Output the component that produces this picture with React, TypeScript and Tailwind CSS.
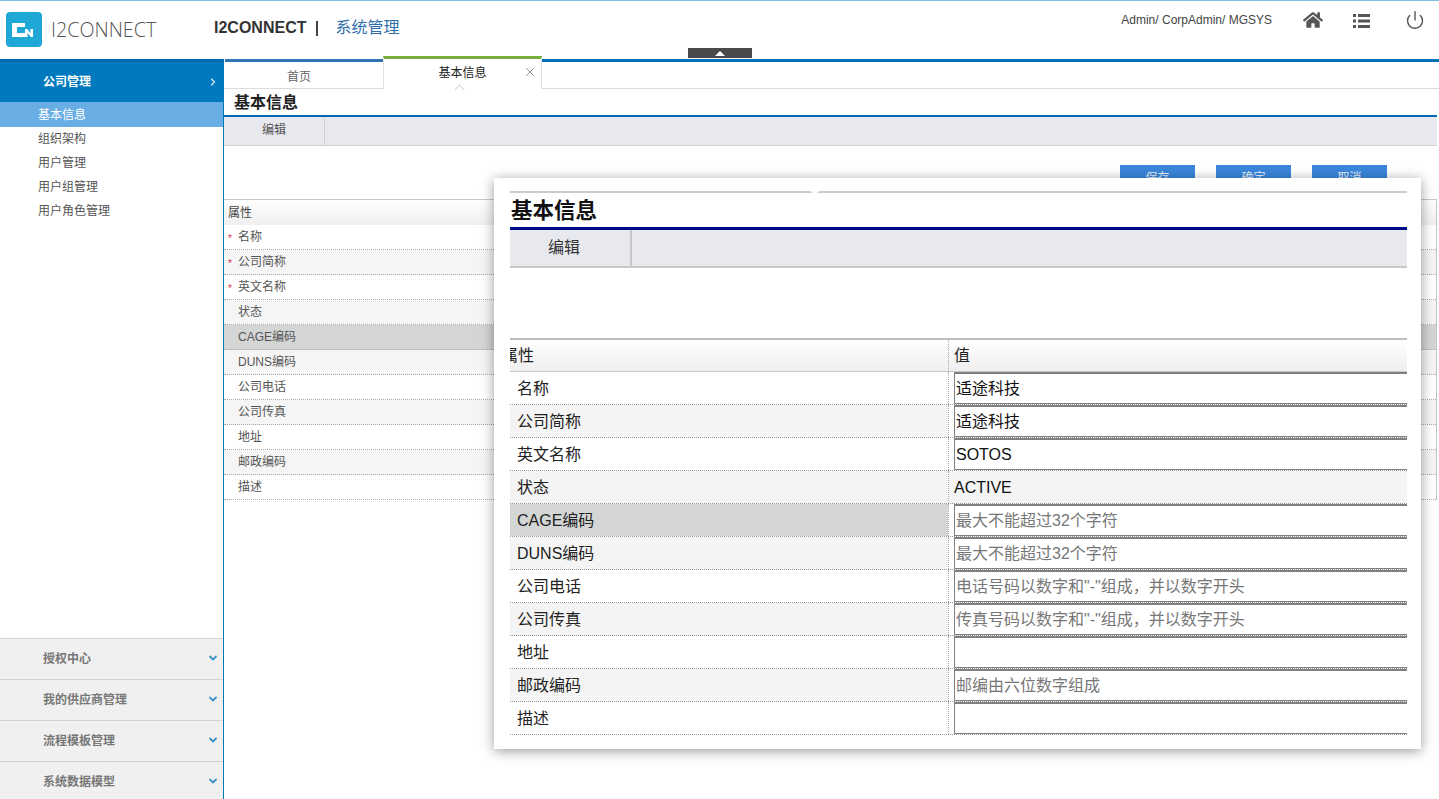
import React from "react";
import { ChevronRight, ChevronDown, X, Power } from "lucide-react";
import { FaHome } from "react-icons/fa";

const baseRows = [
  { label: "名称", req: true },
  { label: "公司简称", req: true },
  { label: "英文名称", req: true },
  { label: "状态" },
  { label: "CAGE编码", hover: true },
  { label: "DUNS编码" },
  { label: "公司电话" },
  { label: "公司传真" },
  { label: "地址" },
  { label: "邮政编码" },
  { label: "描述" },
];

const popRows = [
  { label: "名称", value: "适途科技", cjk: true },
  { label: "公司简称", value: "适途科技", cjk: true },
  { label: "英文名称", value: "SOTOS" },
  { label: "状态", text: "ACTIVE" },
  { label: "CAGE编码", ph: "最大不能超过32个字符", hover: true },
  { label: "DUNS编码", ph: "最大不能超过32个字符" },
  { label: "公司电话", ph: "电话号码以数字和\"-\"组成，并以数字开头" },
  { label: "公司传真", ph: "传真号码以数字和\"-\"组成，并以数字开头" },
  { label: "地址" },
  { label: "邮政编码", ph: "邮编由六位数字组成" },
  { label: "描述" },
];

function Logo() {
  return (
    <div className="w-[36px] h-[35px] rounded-[4px] bg-[#1fa7d6] flex items-center justify-center shrink-0">
      <svg width="26" height="18" viewBox="0 0 26 18">
        <path d="M1 2h13v4H6v6h8v4H1z" fill="#fff" />
        <path d="M14 8h2.2l3.3 4.2V8H22v8h-2.2l-3.3-4.2V16H14z" fill="#fff" />
      </svg>
    </div>
  );
}

function ListIcon() {
  return (
    <svg width="17" height="14" viewBox="0 0 17 14" className="mt-[3px] mr-[35px] shrink-0" fill="#555">
      <rect x="0" y="0" width="3" height="3" />
      <rect x="5" y="0" width="12" height="3" />
      <rect x="0" y="5.5" width="3" height="3" />
      <rect x="5" y="5.5" width="12" height="3" />
      <rect x="0" y="11" width="3" height="3" />
      <rect x="5" y="11" width="12" height="3" />
    </svg>
  );
}

export default function App() {
  return (
    <div
      className="relative w-[1439px] h-[799px] overflow-hidden bg-white flex flex-col text-[12px] text-[#444]"
      style={{ fontFamily: '"Liberation Sans", "Noto Sans CJK SC", sans-serif' }}
    >
      {/* Header */}
      <header className="h-[59px] shrink-0 border-t-[1px] border-[#7cc0e2] flex items-start">
        <div className="w-[214px] shrink-0 pl-[6px] pt-[11px] flex items-center gap-[9px]">
          <Logo />
          <span className="text-[19.7px] leading-[35px] font-light text-[#555]" style={{ fontFamily: '"Open Sans", sans-serif' }}>
            I2CONNECT
          </span>
        </div>
        <div className="flex items-center mt-[15px] h-[24px]">
          <span className="text-[16px] leading-[24px] font-bold text-[#333]">I2CONNECT</span>
          <span className="ml-[10px] w-[2px] h-[15px] bg-[#444]" />
          <span className="ml-[17px] text-[16px] leading-[24px] text-[#2f6fab]">系统管理</span>
        </div>
        <div className="ml-auto flex items-start pt-[10px] pr-[14px]">
          <span className="text-[12px] leading-[18px] text-[#444] mr-[31px]">Admin/ CorpAdmin/ MGSYS</span>
          <FaHome className="text-[#555] w-[20px] h-[18px] mr-[30px]" />
          <ListIcon />
          <Power className="text-[#555] w-[20px] h-[20px] -mt-[1px]" strokeWidth={1.7} />
        </div>
      </header>

      {/* Collapse handle */}
      <div className="absolute left-[688px] top-[48px] w-[64px] h-[10px] bg-[#4a4a4a] flex items-center justify-center">
        <div className="w-0 h-0 border-x-[5px] border-x-transparent border-b-[5px] border-b-white" />
      </div>

      <div className="flex-1 flex min-h-0">
        {/* Sidebar */}
        <aside className="w-[224px] shrink-0 border-r border-[#0078b4] flex flex-col">
          <div className="h-[43px] bg-[#0079be] border-t-[3px] border-[#006ab0] flex items-center justify-between pl-[43px] pr-[4px] text-white font-bold">
            <span>公司管理</span>
            <ChevronRight className="w-[12px] h-[12px] text-[#d8eaf6]" strokeWidth={2.4} />
          </div>
          <nav className="flex flex-col">
            <div className="h-[25px] bg-[#69ade5] text-white pl-[38px] leading-[26px]">基本信息</div>
            {["组织架构", "用户管理", "用户组管理", "用户角色管理"].map((t) => (
              <div key={t} className="h-[24px] pl-[38px] leading-[24px] text-[#555]">
                {t}
              </div>
            ))}
          </nav>
          <div className="mt-auto flex flex-col">
            {["授权中心", "我的供应商管理", "流程模板管理", "系统数据模型"].map((t, i) => (
              <div
                key={t}
                className={`${i === 3 ? "h-[38px] pt-[2px]" : "h-[41px]"} bg-[#f0f0f0] border-t border-[#d2d2d2] flex items-center justify-between pl-[43px] pr-[4px] text-[#777] font-bold`}
              >
                <span>{t}</span>
                <ChevronDown className="w-[12px] h-[12px] -mt-[2px] text-[#3f8fc9]" strokeWidth={3.6} />
              </div>
            ))}
          </div>
        </aside>

        {/* Main */}
        <main className="flex-1 min-w-0 flex flex-col">
          <div className="h-[30px] shrink-0 flex border-b border-[#dcdcdc]">
            <div className="ml-[1px] w-[158px] border-t-[3px] border-[#2f74b5] pr-[10px] text-center leading-[31px] text-[#666]">首页</div>
            <div className="relative w-[159px] -mt-[3px] border-t-[3px] border-[#76ad3d] border-l border-r border-l-[#e2e2e2] border-r-[#e2e2e2] bg-white flex items-center justify-center h-[33px] text-[#222]">
              <span className="-mt-[3px]">基本信息</span>
              <X className="absolute right-[4px] top-[6px] w-[14px] h-[14px] text-[#777]" strokeWidth={1.4} />
              <div className="absolute left-[72px] -bottom-[4px] w-[7px] h-[7px] rotate-45 bg-white border-l border-t border-[#d4d4d4]" />
            </div>
            <div className="flex-1 border-t-[3px] border-[#0070b8]" />
          </div>
          <div className="mr-[2px] flex flex-col flex-1 min-h-0">
            <div className="h-[28px] shrink-0 border-b-[2px] border-[#0068b4] pl-[10px] text-[16px] leading-[28px] font-bold text-[#222]">基本信息</div>
            <div className="h-[29px] shrink-0 bg-[#e8e9ee] border-b border-[#d0d0d0] flex">
              <div className="w-[101px] border-r border-[#d0d0d0] text-center leading-[26px] text-[#555]">编辑</div>
            </div>
            <div className="h-[53px] shrink-0 flex justify-end items-start gap-[21px] pt-[19px] pr-[50px]">
              {["保存", "确定", "取消"].map((t) => (
                <button key={t} className="w-[75px] h-[26px] bg-[#3a87dc] text-[#e8f2fc] text-[12px] leading-[24px]">
                  {t}
                </button>
              ))}
            </div>
            <div className="border-t border-[#c8c8c8] border-r border-r-[#c4c4c4]">
              <div className="h-[25px] pl-[4px] leading-[26px] text-[#444] bg-gradient-to-b from-white to-[#efefef]">属性</div>
              {baseRows.map((r, i) => (
                <div
                  key={r.label}
                  className={`h-[25px] border-b border-dotted border-[#aaa] flex items-center ${r.hover ? "bg-[#d4d5d5]" : i % 2 === 1 ? "bg-[#f5f5f5]" : "bg-white"}`}
                >
                  <span className="w-[14px] pl-[4px] pt-[3px] text-[#d8314f] text-[10px] leading-[10px]">{r.req ? "*" : ""}</span>
                  <span className="text-[#555] leading-[24px]">{r.label}</span>
                </div>
              ))}
            </div>
          </div>
        </main>
      </div>

      {/* Enlarged popup over the page */}
      <div className="absolute left-[494px] top-[178px] w-[927px] h-[571px] bg-white shadow-[0_2px_12px_rgba(0,0,0,0.4)] pl-[16px] pt-[13px] pr-[14px] text-[16px] text-[#111]">
        <div className="relative overflow-hidden h-[558px]">
          <div className="h-[2px] bg-[#cbcbcb]" />
          <div className="absolute left-[300px] top-0 w-0 h-0 border-x-[5px] border-x-transparent border-t-[3px] border-t-white" />
          <div className="h-[34px] text-[21.5px] leading-[36px] font-bold text-[#111] pl-[1px]">基本信息</div>
          <div className="h-[3px] bg-[#000b8a]" />
          <div className="h-[38px] bg-[#e8e9ee] border-b-[2px] border-[#c8c8c8] flex">
            <div className="w-[122px] border-r-[2px] border-[#c8c8c8] pr-[12px] text-center leading-[35px] text-[#333]">编辑</div>
          </div>
          <div className="h-[70px]" />
          <div className="h-[34px] flex border-t-[2px] border-[#bdbdbd] border-b border-b-[#c8c8c8] bg-gradient-to-b from-white to-[#efefef] text-[#222]">
            <div className="w-[446px] -ml-[8px] leading-[32px] shrink-0">属性</div>
            <div className="flex-1 border-l border-dotted border-[#aaa] pl-[5px] leading-[32px]">值</div>
          </div>
          {popRows.map((r, i) => (
            <div key={r.label} className={`h-[33px] flex border-b border-dotted border-[#999] ${i % 2 === 1 ? "bg-[#f4f4f4]" : "bg-white"}`}>
              <div className={`w-[438px] shrink-0 pl-[7px] leading-[33px] text-[#222] ${r.hover ? "bg-[#d4d5d5]" : ""}`}>{r.label}</div>
              <div className="flex-1 min-w-0 border-l border-dotted border-[#aaa] pl-[5px] bg-white">
                {r.text ? (
                  <div className="-ml-[5px] pl-[5px] h-full leading-[33px] text-[#111] bg-[#f4f4f4]">{r.text}</div>
                ) : (
                  <input
                    readOnly
                    value={r.value ?? ""}
                    placeholder={r.ph ?? ""}
                    className={`w-full h-[32px] border border-[#808080] border-r-0 border-t-[2px] px-[1px] text-[16px] text-[#111] bg-white outline-none placeholder:text-[#777] ${r.cjk ? "pb-[4px]" : ""}`}
                    style={{ fontFamily: '"Liberation Sans", "Noto Sans CJK SC", sans-serif' }}
                  />
                )}
              </div>
            </div>
          ))}
        </div>
      </div>
    </div>
  );
}
